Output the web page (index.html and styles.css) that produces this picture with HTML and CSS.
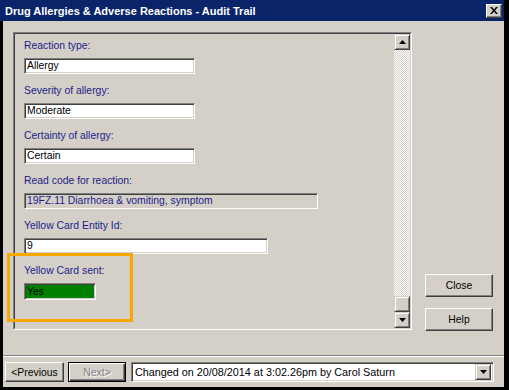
FILE: index.html
```html
<!DOCTYPE html>
<html>
<head>
<meta charset="utf-8">
<title>Audit Trail</title>
<link rel="stylesheet" href="styles.css">
</head>
<body>
<div class="window">
  <div class="titlebar">
    <span class="title">Drug Allergies &amp; Adverse Reactions - Audit Trail</span>
    <div class="tb-close"><svg width="8" height="7" viewBox="0 0 8 7"><path d="M0 0h2l2 2.4L6 0h2L5 3.5 8 7H6L4 4.6 2 7H0l3-3.5z" fill="#000"/></svg></div>
  </div>
  <div class="client">
    <div class="main">
      <div class="panel">
        <div class="panel-inner">
          <div class="fields">
            <div class="field"><div class="label">Reaction type:</div><div class="input w-short">Allergy</div></div>
            <div class="field"><div class="label">Severity of allergy:</div><div class="input w-short">Moderate</div></div>
            <div class="field"><div class="label">Certainty of allergy:</div><div class="input w-short">Certain</div></div>
            <div class="field"><div class="label">Read code for reaction:</div><div class="input readonly w-long">19FZ.11 Diarrhoea &amp; vomiting, symptom</div></div>
            <div class="field"><div class="label">Yellow Card Entity Id:</div><div class="input w-mid">9</div></div>
            <div class="field"><div class="label">Yellow Card sent:</div><div class="input green">Yes</div></div>
          </div>
          <div class="scrollbar">
            <div class="sb-btn"><svg width="7" height="4" viewBox="0 0 7 4"><path d="M3.5 0L7 4H0z" fill="#000"/></svg></div>
            <div class="sb-track"></div>
            <div class="sb-thumb"></div>
            <div class="sb-btn"><svg width="7" height="4" viewBox="0 0 7 4"><path d="M0 0h7L3.5 4z" fill="#000"/></svg></div>
          </div>
        </div>
      </div>
      <div class="side">
        <div class="btn">Close</div>
        <div class="btn help">Help</div>
      </div>
    </div>
    <div class="sep"></div>
    <div class="bottom">
      <div class="btn nav prev">&lt;Previous</div>
      <div class="btn nav next disabled">Next&gt;</div>
      <div class="combo">
        <span class="combo-text">Changed on 20/08/2014 at 3:02.26pm by Carol Saturn</span>
        <div class="combo-btn"><svg width="7" height="4" viewBox="0 0 7 4"><path d="M0 0h7L3.5 4z" fill="#000"/></svg></div>
      </div>
    </div>
  </div>
  <div class="highlight"></div>
</div>
</body>
</html>
```

FILE: styles.css
```css
* { box-sizing: border-box; }
body {
  margin: 0;
  font-family: "Liberation Sans", Arial, sans-serif;
  font-size: 10.4px;
}
.window {
  position: relative;
  width: 509px;
  height: 390px;
  background: #000;
  display: flex;
  flex-direction: column;
  overflow: hidden;
}
.titlebar {
  height: 21px;
  margin-right: 5px;
  background: #0a246a;
  display: flex;
  align-items: center;
  justify-content: space-between;
  padding: 0 2px 0 5px;
}
.title {
  color: #fff;
  font-weight: bold;
  font-size: 11px;
}
.tb-close {
  width: 16px;
  height: 14px;
  background: #d4d0c8;
  border: 1px solid;
  border-color: #fff #404040 #404040 #fff;
  box-shadow: inset -1px -1px #808080;
  display: flex;
  align-items: center;
  justify-content: center;
}
.client {
  flex: 1;
  margin: 0 5px 3px 3px;
  background: #d4d0c8;
  display: flex;
  flex-direction: column;
}
.main {
  display: flex;
  margin-top: 11px;
}
.panel {
  margin-left: 10px;
  width: 399px;
  height: 298px;
  border: 1px solid;
  border-color: #808080 #fff #fff #808080;
}
.panel-inner {
  height: 100%;
  border: 1px solid;
  border-color: #404040 #d4d0c8 #d4d0c8 #404040;
  display: flex;
}
.fields {
  flex: 1;
  padding: 5px 0 0 9px;
}
.field { margin-bottom: 10px; }
.label {
  height: 13px;
  line-height: 13px;
  color: #1c1c8a;
  margin-bottom: 6px;
}
.input {
  height: 16px;
  line-height: 14px;
  padding-left: 2px;
  background: #fff;
  color: #000;
  border: 1px solid;
  border-color: #808080 #fff #fff #808080;
  box-shadow: inset 1px 1px #404040, inset -1px -1px #d4d0c8;
  white-space: nowrap;
}
.w-short { width: 171px; }
.w-long { width: 294px; }
.w-mid { width: 244px; }
.readonly {
  background: #d4d0c8;
  color: #1c1c8a;
}
.green {
  width: 72px;
  height: 17px;
  line-height: 15px;
  margin-top: 2px;
  background: #008000;
}
.scrollbar {
  width: 16px;
  display: flex;
  flex-direction: column;
}
.sb-btn, .sb-thumb, .combo-btn {
  width: 16px;
  height: 16px;
  background: #d4d0c8;
  border: 1px solid;
  border-color: #d4d0c8 #404040 #404040 #d4d0c8;
  box-shadow: inset 1px 1px #fff, inset -1px -1px #808080;
  display: flex;
  align-items: center;
  justify-content: center;
  flex: none;
}
.sb-track {
  flex: 1;
  background: repeating-conic-gradient(#fff 0 25%, #d4d0c8 0 50%) 0 0 / 2px 2px;
}
.side {
  margin-left: 13px;
  width: 68px;
  display: flex;
  flex-direction: column;
  justify-content: flex-end;
  gap: 11px;
}
.btn {
  height: 23px;
  background: #d4d0c8;
  border: 1px solid;
  border-color: #fff #404040 #404040 #fff;
  box-shadow: inset -1px -1px #808080;
  display: flex;
  align-items: center;
  justify-content: center;
  color: #000;
}
.help { margin-bottom: -1px; }
.sep {
  margin-top: 25px;
  height: 2px;
  border-top: 1px solid #808080;
  border-bottom: 1px solid #fff;
}
.bottom {
  margin-top: 5px;
  padding-left: 2px;
  display: flex;
  height: 20px;
}
.nav { height: 20px; }
.prev { width: 59px; }
.next {
  width: 58px;
  margin-left: 4px;
  border: 1px solid #000;
  box-shadow: inset 1px 1px #fff, inset -1px -1px #404040, inset -2px -2px #808080;
}
.disabled {
  color: #808080;
  text-shadow: 1px 1px #fff;
}
.combo {
  margin-left: 5px;
  width: 363px;
  height: 20px;
  background: #fff;
  border: 1px solid;
  border-color: #808080 #fff #fff #808080;
  box-shadow: inset 1px 1px #404040, inset -1px -1px #d4d0c8;
  display: flex;
  align-items: center;
  justify-content: space-between;
  padding: 0 2px 0 3px;
}
.combo-text {
  color: #000;
  font-size: 10.8px;
}
.highlight {
  position: absolute;
  left: 7px;
  top: 253px;
  width: 126px;
  height: 69px;
  border: 3px solid #f6a800;
}
```
